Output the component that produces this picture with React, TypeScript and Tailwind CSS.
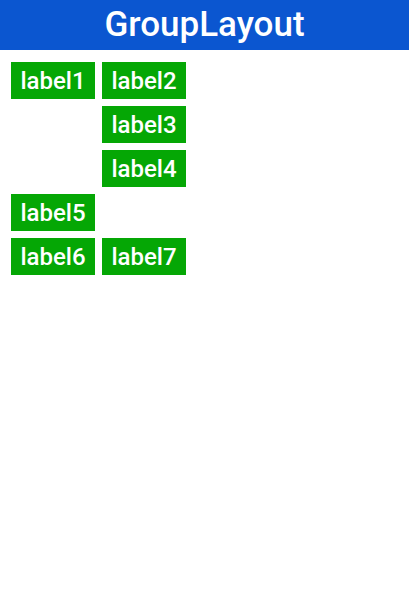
const rows: (string | null)[][] = [
  ["label1", "label2"],
  [null, "label3"],
  [null, "label4"],
  ["label5", null],
  ["label6", "label7"],
];

const Label = ({ text }: { text: string }) => (
  <div className="flex h-[37px] w-[84px] items-center justify-center bg-[#05a705] text-[24px] leading-none font-medium text-white">
    {text}
  </div>
);

export default function App() {
  return (
    <div className="h-[613px] w-[409px] bg-white font-['Roboto',sans-serif]">
      <div className="flex h-[50px] items-center justify-center bg-[#0b56d0] text-[35px] font-medium text-white">
        GroupLayout
      </div>
      <div className="flex flex-col gap-[7px] px-[11px] pt-[12px]">
        {rows.map((row, i) => (
          <div key={i} className="flex gap-[7px]">
            {row.map((cell, j) =>
              cell ? <Label key={j} text={cell} /> : <div key={j} className="w-[84px]" />
            )}
          </div>
        ))}
      </div>
    </div>
  );
}
